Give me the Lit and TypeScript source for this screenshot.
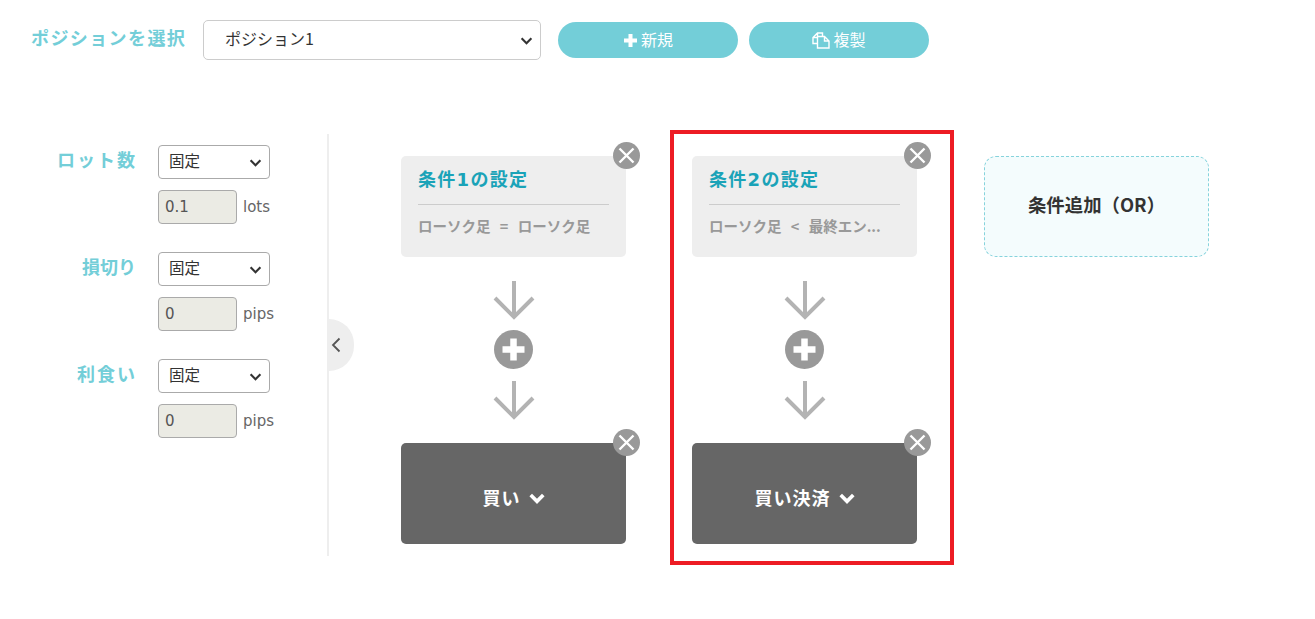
import { LitElement, html, css, svg } from "lit";
import { customElement } from "lit/decorators.js";

const chevron = (cls: string) => html`<svg class=${cls} viewBox="0 0 14 9"><path d="M1.5 1.5 7 7l5.5-5.5" fill="none" stroke="currentColor" stroke-width="2.4"/></svg>`;
const arrow = svg`<svg class="arrow" viewBox="0 0 42 40"><path d="M21 1v36M2 18l19 19 19-19" fill="none" stroke="#b3b3b3" stroke-width="4"/></svg>`;

@customElement("app-root")
export class AppRoot extends LitElement {
  static styles = css`
    :host { display: block; width: 1315px; height: 619px; background: #fff; overflow: hidden;
      font-family: "DejaVu Sans", "Noto Sans CJK JP", sans-serif; color: #333; }
    * { box-sizing: border-box; }
    .top { display: flex; align-items: flex-start; padding: 20px 0 0 31px; height: 130px; }
    .pos-label { width: 172px; font: 700 18px/34px "Noto Sans CJK JP", sans-serif; color: #73ced8; letter-spacing: 1.4px; white-space: nowrap; }
    .selwrap { position: relative; display: block; }
    select { appearance: none; -webkit-appearance: none; display: block; width: 100%; height: 100%; background: #fff;
      font: 400 16px "Noto Sans CJK JP", sans-serif; color: #333; outline: none; margin: 0; padding-bottom: 4px; }
    .selwrap .chev { position: absolute; width: 13px; height: 8px; color: #333; top: 50%; margin-top: -3px; right: 8px; pointer-events: none; }
    .pos-sel { width: 338px; height: 40px; margin-right: 17px; }
    .pos-sel select { border: 1px solid #ccc; border-radius: 5px; padding-left: 21px; }
    .btn { width: 180px; height: 36px; margin: 2px 11px 0 0; border: none; border-radius: 18px; background: #73ced8; color: #fff;
      display: flex; align-items: center; justify-content: center; gap: 3px; padding: 0 0 2px; font: 400 16px "Noto Sans CJK JP", sans-serif; }
    .btn svg { width: 15px; height: 15px; margin-top: 2px; }
    .btn .copy { width: 18px; height: 17px; }
    .main { display: flex; align-items: flex-start; }
    .side { position: relative; width: 329px; height: 422px; margin-top: 4px; padding-top: 11px; border-right: 2px solid #eee; }
    .row { display: flex; height: 107px; }
    .row-label { width: 135px; text-align: right; font: 700 18px/28px "Noto Sans CJK JP", sans-serif; color: #73ced8; white-space: nowrap; }
    .row-label.wide { letter-spacing: 2px; }
    .row-label span { display: inline-block; margin-right: -1px; }
    .row-label.wide span { margin-right: -2px; }
    .fields { margin-left: 23px; display: flex; flex-direction: column; gap: 11px; }
    .mini { width: 112px; height: 34px; }
    .mini select { border: 1px solid #aaa; border-radius: 4px; padding-left: 10px; font-size: 15.5px; }
    .val { display: flex; align-items: center; gap: 6px; font-size: 15px; color: #666; }
    input { width: 79px; height: 34px; border: 1px solid #aaa; border-radius: 4px; background: #ebebe4; padding: 0 6px;
      font: 400 15px "DejaVu Sans", sans-serif; color: #555; outline: none; margin: 0; }
    .collapse { position: absolute; left: 100%; margin-left: 2px; top: 185px; width: 25px; height: 52px; background: #eee;
      border-radius: 0 26px 26px 0; display: flex; align-items: center; padding-left: 2px; }
    .collapse svg { width: 10px; height: 16px; }
    .conds { display: flex; align-items: flex-start; margin-left: 72px; }
    .col { width: 225px; display: flex; flex-direction: column; align-items: center; }
    .c1 { margin: 26px 44px 0 0; }
    .hl { border: 4px solid #ed1c24; padding: 22px 33px 17px 18px; width: 284px; }
    .card { position: relative; width: 225px; height: 101px; border-radius: 5px; }
    .setting { background: #eee; padding: 12px 17px 0; }
    .title { font: 700 18px/24px "DejaVu Sans", "Noto Sans CJK JP", sans-serif; letter-spacing: 1.3px; color: #1aa3b8; height: 37px; border-bottom: 1px solid #ccc; white-space: nowrap; }
    .desc { font: 700 14.5px/20px "Noto Sans CJK JP", sans-serif; word-spacing: 6px; color: #999; margin-top: 11px; white-space: nowrap; }
    .action { background: #666; color: #fff; display: flex; align-items: center; justify-content: center; gap: 8px;
      font: 700 18px "Noto Sans CJK JP", sans-serif; letter-spacing: 1px; padding-top: 6px; }
    .action .chev { width: 16px; height: 11px; margin-top: 3px; }
    .action .chev path { stroke-width: 3.2px; }
    .close { position: absolute; right: -14px; top: -14px; width: 27px; height: 27px; border-radius: 50%; background: #999; }
    .close svg { display: block; width: 27px; height: 27px; }
    .arrow { display: block; width: 42px; height: 40px; }
    .a1 { margin-top: 23px; }
    .plus { margin: 10px 0 11px; width: 39px; height: 39px; }
    .plus svg { display: block; width: 39px; height: 39px; }
    .a2 { margin-bottom: 23px; }
    .add { margin: 26px 0 0 30px; border: 1px dashed #86d3dc; border-radius: 12px; background: #f4fcfd; display: flex;
      align-items: center; justify-content: center; padding-bottom: 6px; font: 700 18.4px "Noto Sans CJK JP", sans-serif; color: #333; }
  `;

  private close() {
    return html`<div class="close"><svg viewBox="0 0 27 27"><path d="M6.5 6.5l14 14M20.5 6.5l-14 14" stroke="#fff" stroke-width="2.4"/></svg></div>`;
  }

  private column(title: string, desc: string, action: string, cls: string) {
    return html`<div class="col ${cls}">
      <div class="card setting">
        ${this.close()}
        <div class="title">${title}</div>
        <div class="desc">${desc}</div>
      </div>
      <div class="a1">${arrow}</div>
      <div class="plus"><svg viewBox="0 0 39 39"><circle cx="19.5" cy="19.5" r="19.5" fill="#999"/><path d="M19.5 8.500v22M8.500 19.500h22" stroke="#fff" stroke-width="6.500"/></svg></div>
      <div class="a2">${arrow}</div>
      <div class="card action">
        ${this.close()}
        <span>${action}</span>${chevron("chev")}
      </div>
    </div>`;
  }

  private row(label: string, value: string, unit: string, cls = "") {
    return html`<div class="row">
      <div class="row-label ${cls}"><span>${label}</span></div>
      <div class="fields">
        <div class="selwrap mini"><select><option>固定</option></select>${chevron("chev")}</div>
        <div class="val"><input .value=${value} readonly /><span>${unit}</span></div>
      </div>
    </div>`;
  }

  render() {
    return html`
      <div class="top">
        <div class="pos-label">ポジションを選択</div>
        <div class="selwrap pos-sel"><select><option>ポジション1</option></select>${chevron("chev")}</div>
        <button class="btn"><svg viewBox="0 0 15 15"><path d="M7.500 1v13M1 7.500h13" stroke="#fff" stroke-width="4"/></svg>新規</button>
        <button class="btn"><svg class="copy" viewBox="0 0 18 17"><path d="M5.500 11.500H1V5.500L5.500 1H10.500V4.500M1 5.500H5.500V1M5.500 4.500H12.500L17 9V16H5.500zM12.500 4.500V9H17" fill="none" stroke="#fff" stroke-width="1.400"/></svg>複製</button>
      </div>
      <div class="main">
        <div class="side">
          ${this.row("ロット数", "0.1", "lots", "wide")}
          ${this.row("損切り", "0", "pips")}
          ${this.row("利食い", "0", "pips", "wide")}
          <div class="collapse"><svg viewBox="0 0 10 16"><path d="M8.500 1.500 2 8l6.500 6.500" fill="none" stroke="#555" stroke-width="1.800"/></svg></div>
        </div>
        <div class="conds">
          ${this.column("条件1の設定", "ローソク足 = ローソク足", "買い", "c1")}
          ${this.column("条件2の設定", "ローソク足 < 最終エン...", "買い決済", "hl")}
          <div class="card add">条件追加（OR）</div>
        </div>
      </div>
    `;
  }
}
